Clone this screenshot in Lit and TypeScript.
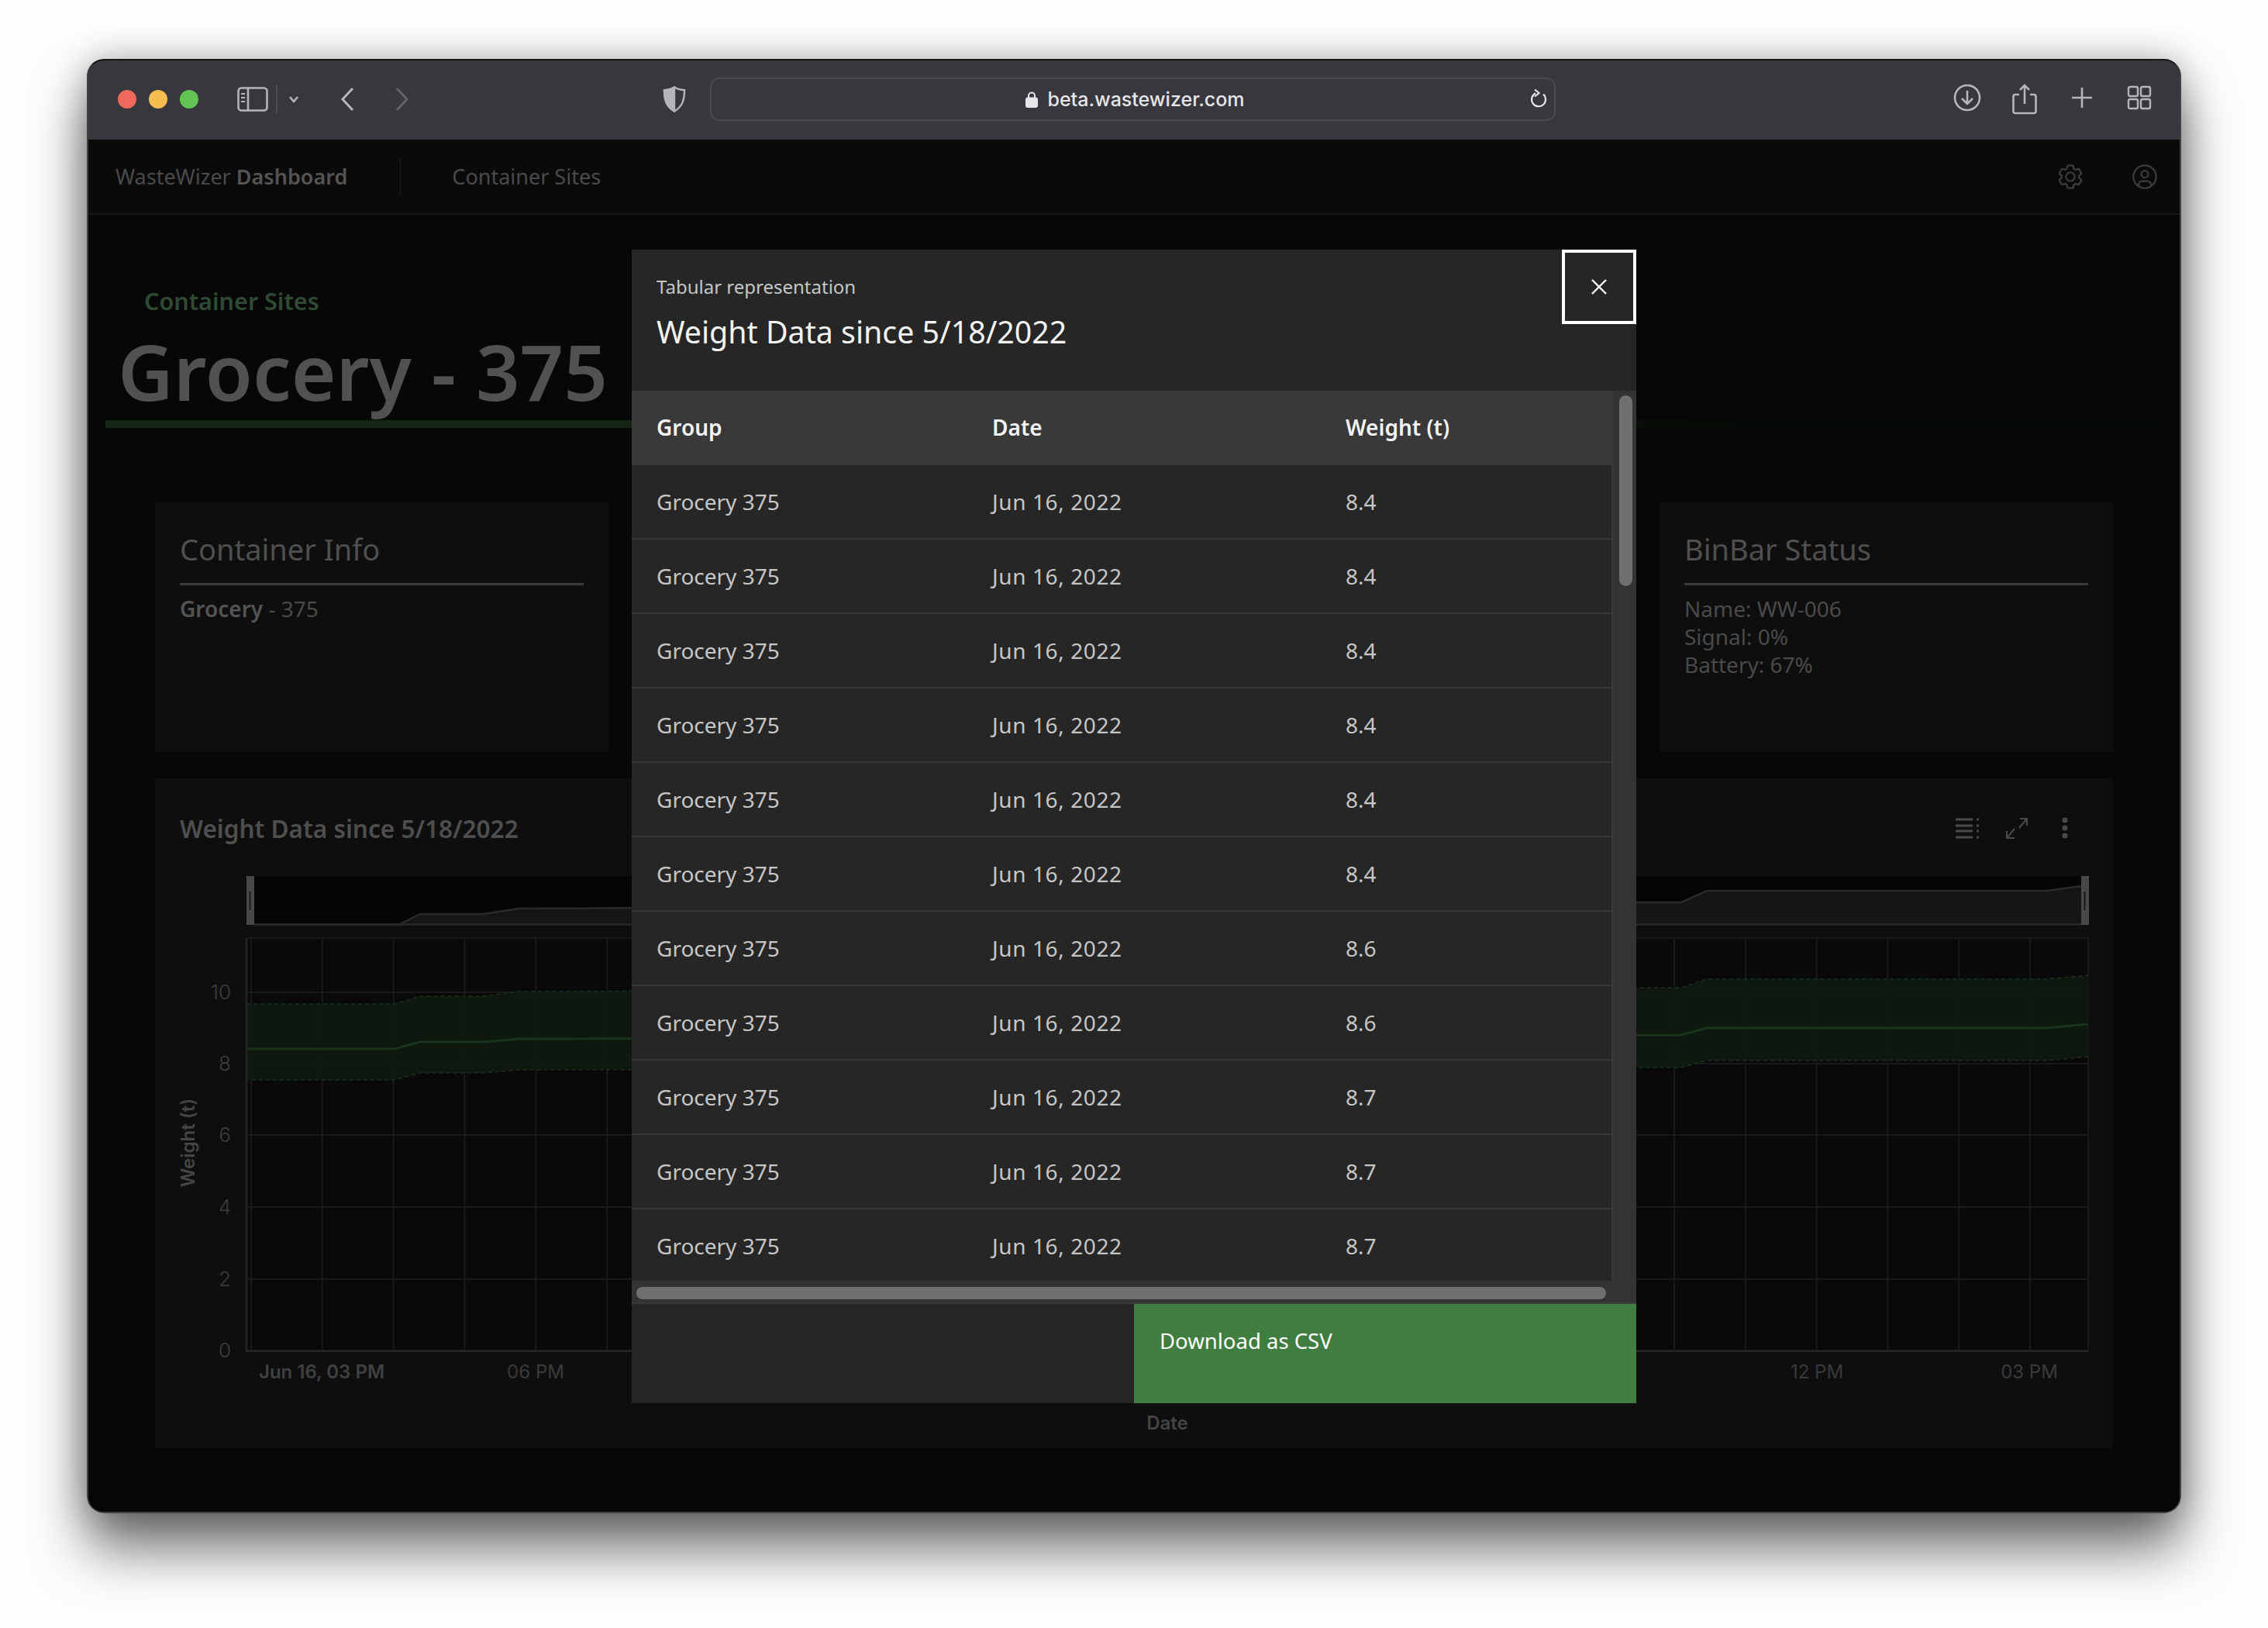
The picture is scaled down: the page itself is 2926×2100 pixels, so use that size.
import { LitElement, html, svg, css } from 'lit'
import { customElement } from 'lit/decorators.js'

const weights = ['8.4', '8.4', '8.4', '8.4', '8.4', '8.4', '8.6', '8.6', '8.7', '8.7', '8.7']
const yTicks = [{ v: '10', y: 1280 }, { v: '8', y: 1372 }, { v: '6', y: 1464 }, { v: '4', y: 1557 }, { v: '2', y: 1650 }, { v: '0', y: 1742 }]
const xGrid = Array.from({ length: 26 }, (_, i) => 324 + i * 91.8)

const bandTop = '318,1295 509,1295 542,1285 624,1285 669,1279 2169,1274 2202,1263 2640,1263 2694,1258'
const bandBottom = '2694,1363 2640,1368 2202,1368 2169,1377 669,1380 624,1384 542,1384 509,1393 318,1393'
const midLine = '318,1353 509,1353 542,1344 624,1344 669,1340 2169,1335 2202,1326 2640,1326 2694,1321'
const miniLine = '328,1193 514,1193 542,1179 624,1179 669,1172 2110,1164 2169,1164 2202,1149 2640,1149 2685,1143'

@customElement('app-root')
export class AppRoot extends LitElement {
  static styles = css`
    :host {
      display: block;
      width: 2926px;
      height: 2100px;
      box-sizing: border-box;
      padding: 76px 112px 148px;
      background: #fdfdfd;
      font-family: 'Noto Sans', sans-serif;
    }

    .window {
      position: relative;
      box-sizing: border-box;
      height: 1876px;
      border: 2px solid #414141;
      border-top-color: #161616;
      border-radius: 22px;
      overflow: hidden;
      background: #070707;
    }
    .shadow {
      border-radius: 22px;
      box-shadow: 0 46px 70px rgba(0, 0, 0, 0.55), 0 0 46px rgba(0, 0, 0, 0.28);
    }

    /* safari toolbar */
    .toolbar {
      display: flex;
      align-items: center;
      box-sizing: border-box;
      height: 102px;
      padding: 0 34px 2px 38px;
      background: #39373e;
      color: #b6b5bb;
    }
    .toolbar svg { display: block; flex: none; }
    .lights { display: flex; gap: 16px; }
    .lights span { width: 24px; height: 24px; border-radius: 50%; }
    .red { background: #ee6a5f; }
    .yellow { background: #f5bd4f; }
    .green { background: #61c454; }
    .sidebar-icon { margin-left: 50px; }
    .chev-icon { margin-left: 10px; }
    .back-icon { margin-left: 42px; }
    .fwd-icon { margin-left: 47px; color: #66646b; }
    .shield-icon { margin-left: 323px; }
    .url {
      display: flex;
      align-items: center;
      justify-content: center;
      gap: 12px;
      position: relative;
      box-sizing: border-box;
      width: 1091px;
      height: 56px;
      margin-left: 30px;
      padding-left: 6px;
      border: 2px solid #4b494f;
      border-radius: 12px;
      color: #e6e6e8;
      font: 500 25px 'Inter', sans-serif;
    }
    .reload { position: absolute; right: 7px; top: 12px; }
    .tools { display: flex; gap: 38px; margin-left: auto; }

    /* app nav */
    .nav {
      display: flex;
      align-items: center;
      height: 95px;
      padding: 0 27px 0 35px;
      border-bottom: 2px solid #171717;
      background: #0a0a0a;
      color: #4a4a4a;
      font-size: 27px;
    }
    .nav b { font-weight: 600; color: #545454; }
    .nav-sep { width: 1px; height: 48px; margin: 0 66px 0 68px; background: #1c1c1c; }
    .nav-icons { display: flex; gap: 60px; margin-left: auto; color: #3c3c3c; }
    .nav-icons svg { display: block; }

    /* page */
    .main { padding: 91px 22px 0; background: #070707; height: 1600px; }
    .crumb { height: 40px; margin-left: 50px; color: #2f4a33; font-size: 30.5px; font-weight: 600; line-height: 40px; }
    .title { height: 112px; margin: 15px 0 0 16px; color: #515151; font-size: 99px; font-weight: 600; line-height: 112px; }
    .rule { height: 10px; margin-top: 7px; background: linear-gradient(90deg, #142415 0, #142415 30%, #060a06 80%); }

    .cards { display: grid; grid-template-columns: repeat(4, 585px); gap: 62px; height: 322px; margin: 96px 64px 0; }
    .card { background: #0e0e0e; padding: 38px 32px 40px; color: #4a4a4a; font-size: 28px; line-height: 36px; }
    .card h3 { margin: 0; padding-bottom: 22px; border-bottom: 3px solid #3a3a3a; color: #4f4f4f; font-size: 38px; font-weight: 400; line-height: 44px; }
    .card p { margin: 12px 0 0; }
    .card b { font-weight: 600; color: #535353; }

    .chart { height: 864px; margin: 34px 64px 0; background: #0e0e0e; }
    .chart-head { display: flex; align-items: center; height: 106px; padding: 22px 58px 0 32px; box-sizing: border-box; }
    .chart-head h4 { margin: 0; color: #4e4e4e; font-size: 31.5px; font-weight: 600; }
    .chart-tools { display: flex; align-items: center; gap: 33px; margin-left: auto; color: #4a4a4a; }
    .chart-tools svg { display: block; }
    .chart-tools .dots { margin-left: 10px; }
    .plot { display: block; }

    /* modal */
    .overlay { position: absolute; inset: 0; display: flex; justify-content: center; align-items: flex-start; padding-top: 244px; }
    .modal { display: flex; flex-direction: column; width: 1296px; height: 1488px; background: #262626; color: #f4f4f4; }
    .m-head { display: flex; justify-content: space-between; height: 182px; }
    .m-text { padding: 32px 0 0 32px; }
    .m-label { color: #c6c6c6; font-size: 24px; line-height: 32px; }
    .m-title { margin-top: 14px; font-size: 39.3px; line-height: 56px; }
    .close { display: flex; align-items: center; justify-content: center; box-sizing: border-box; width: 96px; height: 96px; border: 4px solid #fff; }
    .m-body { display: flex; height: 1148px; }
    .table { flex: none; box-sizing: border-box; width: 1266px; height: 1148px; overflow: hidden; border-right: 2px solid #3a3a3a; }
    .row { display: grid; grid-template-columns: 433px 456px 1fr; align-items: center; box-sizing: border-box; height: 96px; border-bottom: 2px solid #393939; color: #c6c6c6; font-size: 28px; }
    .row > span { padding-left: 32px; }
    .row > span:nth-child(2) { letter-spacing: 0.6px; }
    .row.head { border-bottom: 0; background: #393939; color: #f4f4f4; font-weight: 600; padding-bottom: 2px; }
    .row.head > span:nth-child(2) { letter-spacing: 0; }
    .v-track { flex: 1; background: #333; padding: 6px 5px 0 8px; }
    .v-thumb { height: 246px; border-radius: 9px; background: #6f6f6f; }
    .h-track { height: 30px; box-sizing: border-box; padding: 8px 39px 6px 6px; background: #333; border-bottom: 2px solid #3c3c3c; }
    .h-thumb { height: 16px; border-radius: 8px; background: #6f6f6f; }
    .m-foot { display: flex; flex: 1; }
    .spacer { flex: 1; }
    .csv { width: 648px; box-sizing: border-box; padding: 30px 33px; background: #3f7e40; color: #fff; font-size: 27.500px; line-height: 36px; }
  `

  render() {
    return html`
      <div class="shadow">
      <div class="window">
        ${this.renderToolbar()}
        <div class="nav">
          <span>WasteWizer <b>Dashboard</b></span>
          <div class="nav-sep"></div>
          <span>Container Sites</span>
          <div class="nav-icons">
            <svg width="36" height="36" viewBox="0 0 32 32" fill="currentColor"><path d="M27,16.76c0-.25,0-.5,0-.76s0-.51,0-.77l1.92-1.68A2,2,0,0,0,29.3,11L26.94,7a2,2,0,0,0-1.73-1,2,2,0,0,0-.64.1l-2.43.82a11.35,11.35,0,0,0-1.31-.75l-.51-2.52a2,2,0,0,0-2-1.61H13.64a2,2,0,0,0-2,1.61l-.51,2.52a11.48,11.48,0,0,0-1.32.75L7.43,6.06A2,2,0,0,0,6.79,6,2,2,0,0,0,5.06,7L2.7,11a2,2,0,0,0,.41,2.51L5,15.24c0,.25,0,.5,0,.76s0,.51,0,.77L3.11,18.45A2,2,0,0,0,2.7,21L5.06,25a2,2,0,0,0,1.73,1,2,2,0,0,0,.64-.1l2.43-.82a11.35,11.35,0,0,0,1.31.75l.51,2.52a2,2,0,0,0,2,1.61h4.72a2,2,0,0,0,2-1.61l.51-2.52a11.48,11.48,0,0,0,1.32-.75l2.42.82a2,2,0,0,0,.64.1,2,2,0,0,0,1.73-1L29.3,21a2,2,0,0,0-.41-2.51ZM25.21,24l-3.43-1.16a8.86,8.86,0,0,1-2.71,1.57L18.36,28H13.64l-.71-3.55a9.36,9.36,0,0,1-2.7-1.57L6.79,24,4.43,20l2.72-2.4a8.9,8.9,0,0,1,0-3.13L4.43,12,6.79,8l3.43,1.16a8.86,8.86,0,0,1,2.71-1.57L13.64,4h4.72l.71,3.55a9.36,9.36,0,0,1,2.7,1.57L25.21,8,27.57,12l-2.72,2.4a8.9,8.9,0,0,1,0,3.13L27.57,20Z"/><path d="M16,22a6,6,0,1,1,6-6A5.94,5.94,0,0,1,16,22Zm0-10a3.91,3.91,0,0,0-4,4,3.91,3.91,0,0,0,4,4,3.91,3.91,0,0,0,4-4A3.91,3.91,0,0,0,16,12Z"/></svg>
            <svg width="36" height="36" viewBox="0 0 32 32" fill="currentColor"><path d="M16,8a5,5,0,1,0,5,5A5,5,0,0,0,16,8Zm0,8a3,3,0,1,1,3-3A3,3,0,0,1,16,16Z"/><path d="M16,2A14,14,0,1,0,30,16,14.0158,14.0158,0,0,0,16,2ZM10,26.3765V25a3.0033,3.0033,0,0,1,3-3h6a3.0033,3.0033,0,0,1,3,3v1.3765a11.8989,11.8989,0,0,1-12,0Zm13.9925-1.4507A5.0016,5.0016,0,0,0,19,20H13a5.0016,5.0016,0,0,0-4.9925,4.9258,12,12,0,1,1,15.985,0Z"/></svg>
          </div>
        </div>
        <div class="main">
          <div class="crumb">Container Sites</div>
          <div class="title">Grocery - 375</div>
          <div class="rule"></div>
          <div class="cards">
            <div class="card"><h3>Container Info</h3><p><b>Grocery</b> - 375</p></div>
            <div class="card"></div>
            <div class="card"></div>
            <div class="card"><h3>BinBar Status</h3><p>Name: WW-006<br />Signal: 0%<br />Battery: 67%</p></div>
          </div>
          <div class="chart">
            <div class="chart-head">
              <h4>Weight Data since 5/18/2022</h4>
              <div class="chart-tools">
                <svg width="32" height="28" viewBox="0 0 32 28" fill="none" stroke="currentColor" stroke-width="3"><path d="M1 3h22M1 11h22M1 18h22M1 26h22"/><path d="M28 3h3M28 11h3M28 18h3M28 26h3"/></svg>
                <svg width="30" height="28" viewBox="0 0 30 28" fill="none" stroke="currentColor" stroke-width="2"><path d="M19 2h9v9M28 2 18 14M12 15 2 27M2 18v9h10"/></svg>
                <svg class="dots" width="8" height="30" viewBox="0 0 8 30" fill="currentColor"><circle cx="4" cy="5" r="3.4"/><circle cx="4" cy="15" r="3.4"/><circle cx="4" cy="25" r="3.4"/></svg>
              </div>
            </div>
            ${this.renderPlot()}
          </div>
        </div>
        <div class="overlay">${this.renderModal()}</div>
      </div>
      </div>
    `
  }

  renderToolbar() {
    return html`
      <div class="toolbar">
        <div class="lights"><span class="red"></span><span class="yellow"></span><span class="green"></span></div>
        <svg class="sidebar-icon" width="40" height="32" viewBox="0 0 40 32" fill="none" stroke="currentColor" stroke-width="2.6"><rect x="1.500" y="1.500" width="37" height="29" rx="4"/><path d="M14 2v28"/><path d="M5 9h5M5 14h5M5 19h5" stroke-width="2"/></svg>
        <svg class="chev-icon" width="38" height="36" viewBox="0 0 38 36" fill="none" stroke="currentColor" stroke-width="2.6"><path d="M1 0v36" stroke="#55535a" stroke-width="1.500"/><path d="M18 15l5 6 5-6"/></svg>
        <svg class="back-icon" width="24" height="32" viewBox="0 0 24 32" fill="none" stroke="currentColor" stroke-width="3"><path d="M19 2 6 16l13 14"/></svg>
        <svg class="fwd-icon" width="24" height="32" viewBox="0 0 24 32" fill="none" stroke="currentColor" stroke-width="3"><path d="M5 2l13 14L5 30"/></svg>
        <svg class="shield-icon" width="32" height="34" viewBox="0 0 32 34" fill="none" stroke="currentColor" stroke-width="2.4"><path d="M16 1.500c4 2.400 8 3.400 13 3.600 0 12-2 21-13 27.400C5 26 3 17 3 5.100 8 5 12 3.900 16 1.500Z"/><path d="M16 1.500C12 3.900 8 5 3 5.100c0 12 2 21 13 27.400Z" fill="currentColor"/></svg>
        <div class="url">
          <svg width="16" height="22" viewBox="0 0 16 22" fill="none" stroke="currentColor" stroke-width="2"><path d="M4 10V6.500a4 4 0 0 1 8 0V10"/><rect x="1" y="9.500" width="14" height="11.500" rx="2" fill="currentColor"/></svg>
          <span>beta.wastewizer.com</span>
          <svg class="reload" width="26" height="28" viewBox="0 0 26 28" fill="none" stroke="currentColor" stroke-width="2.2"><path d="M19 7.500A9 9 0 1 1 9 6.200"/><path d="M8 1.500 13.500 6 8 10.500"/></svg>
        </div>
        <div class="tools">
          <svg width="36" height="36" viewBox="0 0 36 36" fill="none" stroke="currentColor" stroke-width="2.6"><circle cx="18" cy="18" r="16"/><path d="M18 9v17M11 19l7 7 7-7"/></svg>
          <svg width="36" height="40" viewBox="0 0 36 40" fill="none" stroke="currentColor" stroke-width="2.6"><path d="M11 14H6a2.500 2.500 0 0 0-2.500 2.500v19A2.500 2.500 0 0 0 6 38h24a2.500 2.500 0 0 0 2.500-2.500v-19A2.500 2.500 0 0 0 30 14h-5"/><path d="M18 26V2M12 8l6-6 6 6"/></svg>
          <svg width="36" height="36" viewBox="0 0 36 36" fill="none" stroke="currentColor" stroke-width="2.6"><path d="M18 5v26M5 18h26"/></svg>
          <svg width="36" height="36" viewBox="0 0 36 36" fill="none" stroke="currentColor" stroke-width="2.4"><rect x="4" y="4" width="12" height="12" rx="2"/><rect x="20" y="4" width="12" height="12" rx="2"/><rect x="4" y="20" width="12" height="12" rx="2"/><rect x="20" y="20" width="12" height="12" rx="2"/></svg>
        </div>
      </div>
    `
  }

  // chart drawn in page coordinates so the numbers read straight off the reference
  renderPlot() {
    return html`
      <svg class="plot" width="2526" height="758" viewBox="200 1110 2526 758" font-family="Inter, sans-serif">
        <rect x="318" y="1130" width="2376" height="63" fill="#050505"/>
        <polygon points="${miniLine} 2685,1193 328,1193" fill="#151515"/>
        <polyline points="${miniLine}" fill="none" stroke="#2a2a2a" stroke-width="2.500"/>
        <path d="M328 1192.500H2685" stroke="#2a2a2a" stroke-width="2.500"/>
        <rect x="318" y="1130" width="10" height="63" fill="#484848"/>
        <rect x="2685" y="1130" width="10" height="63" fill="#484848"/>
        <path d="M322.500 1150v24M2689.500 1150v24" stroke="#1a1a1a" stroke-width="2"/>
        <rect x="318" y="1210" width="2376" height="532" fill="#090909" stroke="#171717" stroke-width="2"/>
        ${xGrid.map(x => svg`<path d="M${x} 1210V1742" stroke="#191919" stroke-width="2"/>`)}
        ${yTicks.slice(0, 5).map(t => svg`<path d="M318 ${t.y}H2694" stroke="#191919" stroke-width="2"/>`)}
        <polygon points="${bandTop} ${bandBottom}" fill="#0f1a10" fill-opacity=".92"/>
        <polyline points="${bandTop}" fill="none" stroke="#1b311d" stroke-width="1.500" stroke-dasharray="5 4"/>
        <polyline points="${bandBottom}" fill="none" stroke="#1b311d" stroke-width="1.500" stroke-dasharray="5 4"/>
        <polyline points="${midLine}" fill="none" stroke="#1a331d" stroke-width="3"/>
        <path d="M318 1210V1743H2694" fill="none" stroke="#262626" stroke-width="2.500"/>
        ${yTicks.map(t => svg`<text x="298" y="${t.y + 9}" text-anchor="end" font-size="26" font-weight="300" fill="#3e3e3e">${t.v}</text>`)}
        <text x="415" y="1778" text-anchor="middle" font-size="24" font-weight="600" fill="#404040">Jun 16, 03 PM</text>
        <text x="691" y="1778" text-anchor="middle" font-size="24" fill="#3a3a3a">06 PM</text>
        <text x="2344" y="1778" text-anchor="middle" font-size="24" fill="#3a3a3a">12 PM</text>
        <text x="2618" y="1778" text-anchor="middle" font-size="24" fill="#3a3a3a">03 PM</text>
        <text x="1506" y="1844" text-anchor="middle" font-size="24" font-weight="600" fill="#444">Date</text>
        <text transform="translate(251 1474) rotate(-90)" text-anchor="middle" font-size="24" font-weight="600" fill="#444">Weight (t)</text>
      </svg>
    `
  }

  renderModal() {
    return html`
      <div class="modal">
        <div class="m-head">
          <div class="m-text">
            <div class="m-label">Tabular representation</div>
            <div class="m-title">Weight Data since 5/18/2022</div>
          </div>
          <div class="close">
            <svg width="22" height="22" viewBox="0 0 22 22" fill="none" stroke="#fff" stroke-width="2.400"><path d="M2 2l18 18M20 2 2 20"/></svg>
          </div>
        </div>
        <div class="m-body">
          <div class="table">
            <div class="row head"><span>Group</span><span>Date</span><span>Weight (t)</span></div>
            ${weights.map(w => html`<div class="row"><span>Grocery 375</span><span>Jun 16, 2022</span><span>${w}</span></div>`)}
          </div>
          <div class="v-track"><div class="v-thumb"></div></div>
        </div>
        <div class="h-track"><div class="h-thumb"></div></div>
        <div class="m-foot">
          <div class="spacer"></div>
          <div class="csv">Download as CSV</div>
        </div>
      </div>
    `
  }
}
